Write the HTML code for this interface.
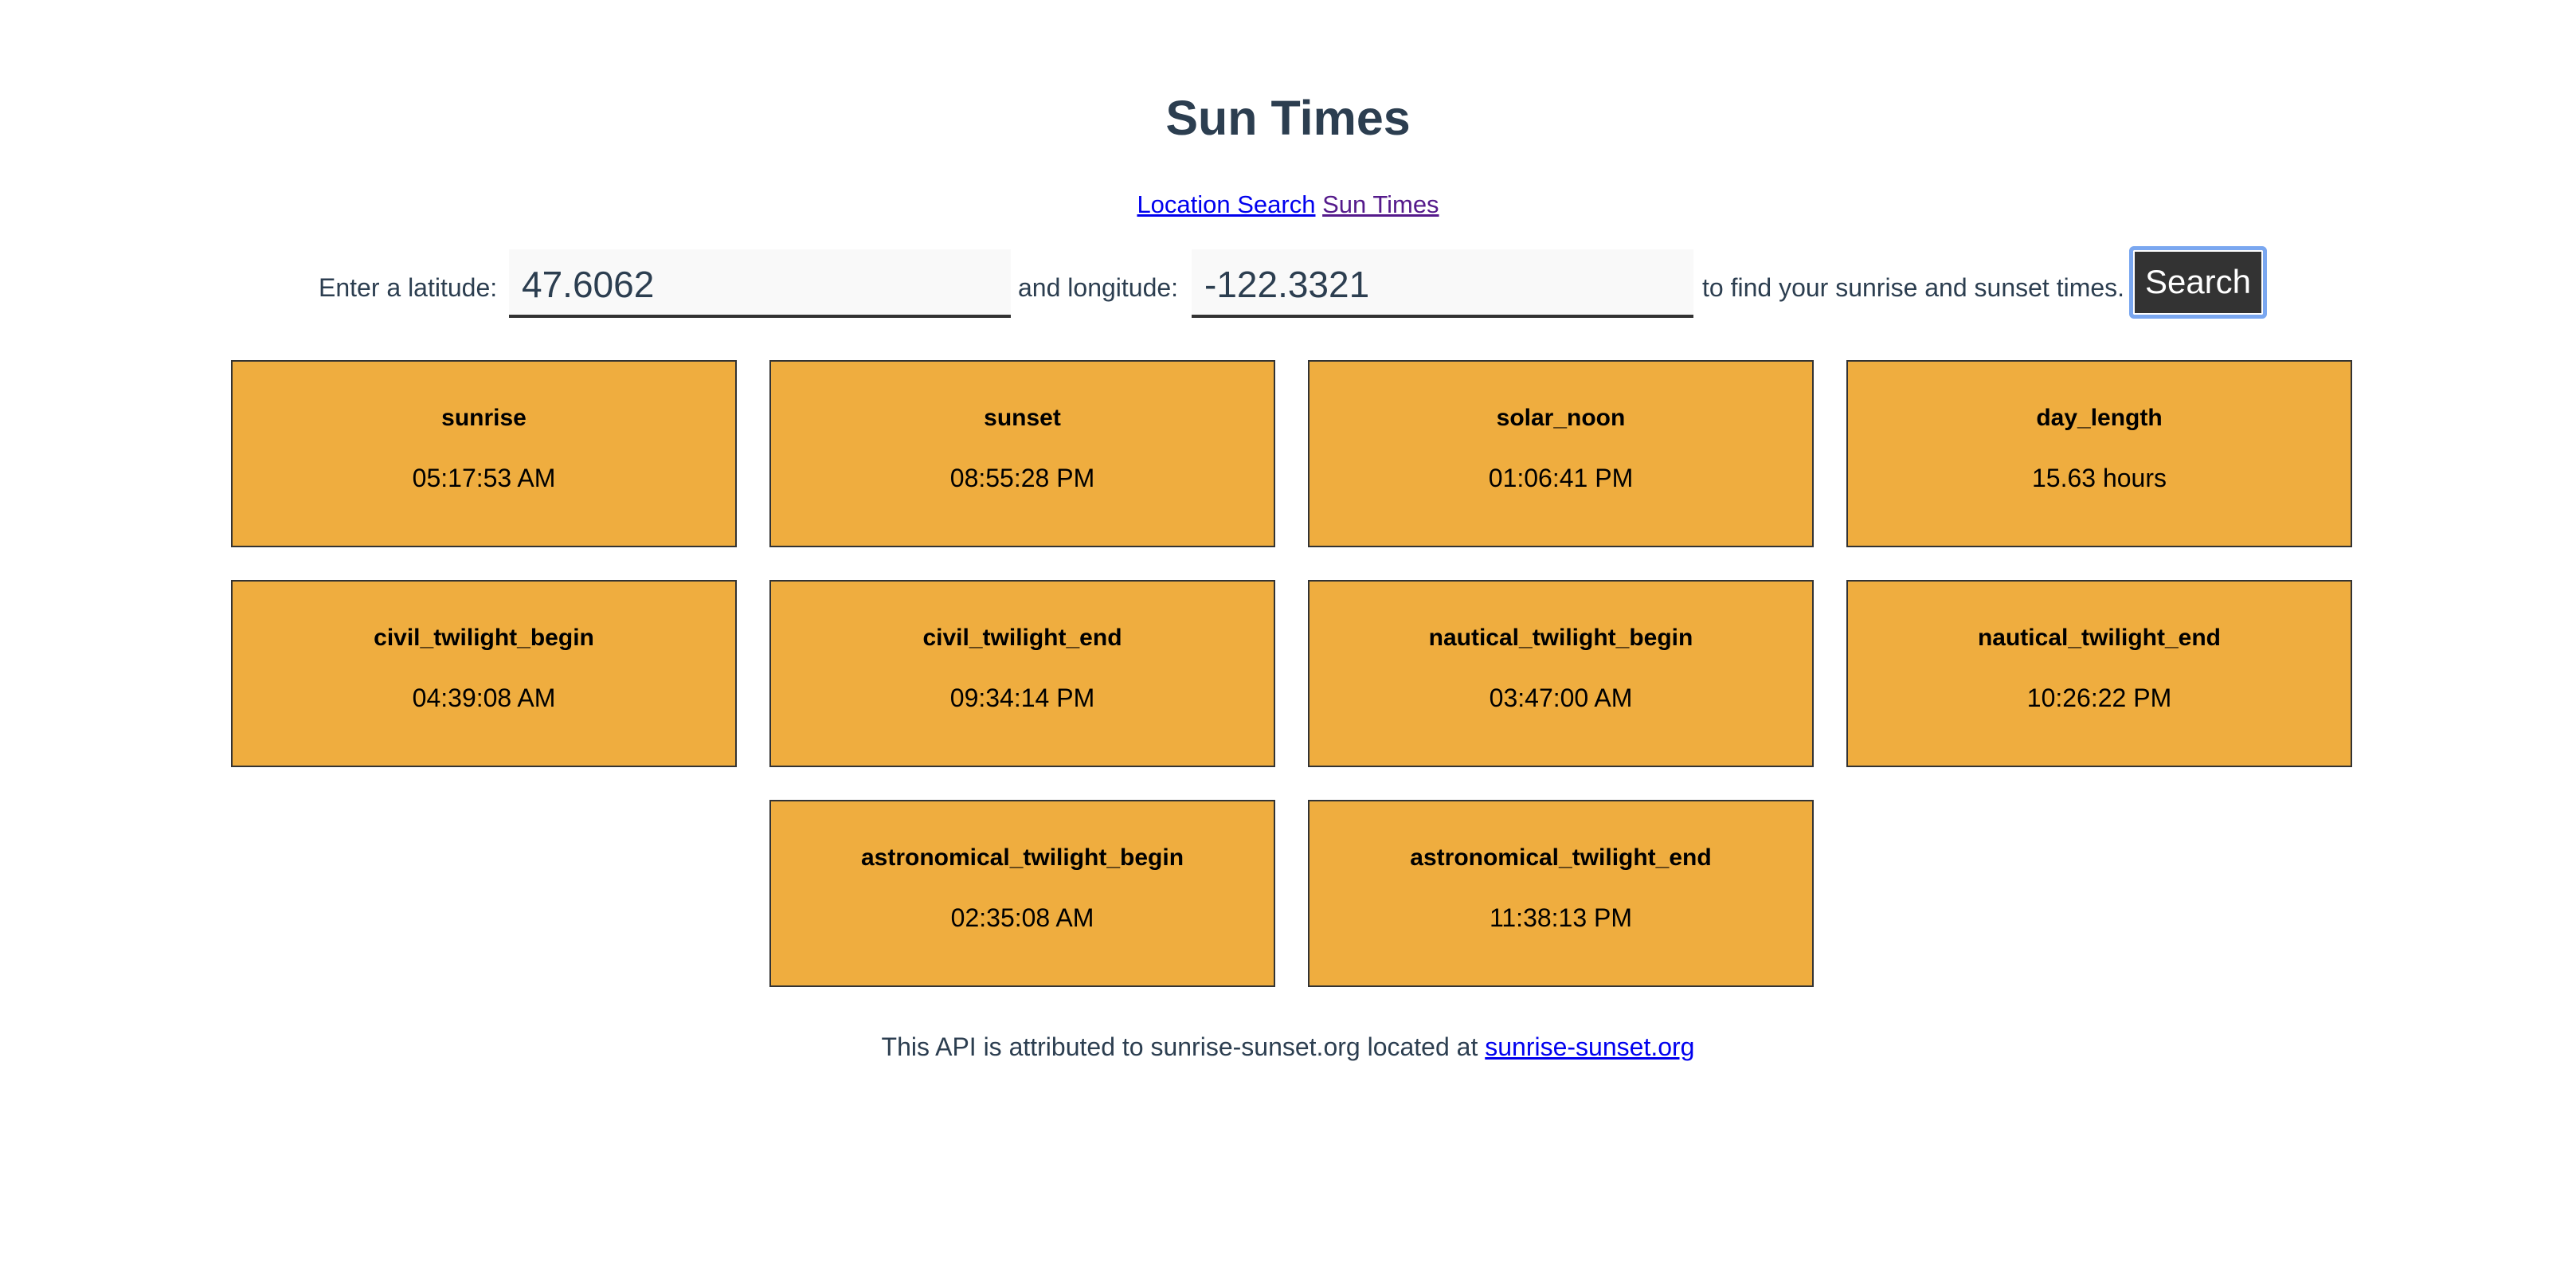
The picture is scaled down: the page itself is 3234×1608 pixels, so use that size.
<!DOCTYPE html>
<html><head><meta charset="utf-8"><style>
html,body{margin:0;padding:0;background:#fff;width:3234px;height:1608px;overflow:hidden;font-family:"Liberation Sans",sans-serif;}
.abs{position:absolute;}
h1{position:absolute;left:0;width:3234px;top:108px;margin:0;text-align:center;font-size:61px;color:#2c3e50;font-weight:bold;line-height:80px;}
.links{left:0;width:3234px;top:237px;text-align:center;font-size:31px;line-height:40px;}
.links a{color:#0000ee}
.links a.v{color:#551a8b}
.lbl{font-size:32px;color:#2c3e50;line-height:40px;top:341px;white-space:nowrap}
.inp{background:#f9f9f9;border-bottom:4px solid #333;height:82px;top:313px;width:630px;box-sizing:content-box}
.inp span{position:absolute;left:16px;top:19px;font-size:46px;line-height:50px;color:#2c3e50}
.btn{left:2673px;top:309px;width:173px;height:91px;box-sizing:border-box;border:5px solid #7aa7f0;border-radius:6px;background:#333;color:#fff;font-size:42px;text-align:center;line-height:80px;box-shadow:inset 0 0 0 2px #fff}
.card{position:absolute;width:635px;height:235px;box-sizing:border-box;border:2px solid #333;background:#efad3f;text-align:center;color:#000}
.card b{position:absolute;left:0;right:0;top:51px;font-size:30px;line-height:40px}
.card i{position:absolute;left:0;right:0;top:126px;font-size:32px;font-style:normal;line-height:40px}
.foot{left:0;width:3234px;top:1294px;text-align:center;font-size:32px;color:#2c3e50;line-height:40px}
.foot a{color:#0000ee}
</style></head><body>
<h1>Sun Times</h1>
<div class="abs links"><a href="#">Location Search</a> <a class="v" href="#">Sun Times</a></div>
<div class="abs lbl" style="left:400px">Enter a latitude:</div>
<div class="abs inp" style="left:639px"><span>47.6062</span></div>
<div class="abs lbl" style="left:1278px">and longitude:</div>
<div class="abs inp" style="left:1496px"><span>-122.3321</span></div>
<div class="abs lbl" style="left:2137px">to find your sunrise and sunset times.</div>
<div class="abs btn">Search</div>

<div class="card" style="left:290px;top:452px"><b>sunrise</b><i>05:17:53 AM</i></div>
<div class="card" style="left:966px;top:452px"><b>sunset</b><i>08:55:28 PM</i></div>
<div class="card" style="left:1642px;top:452px"><b>solar_noon</b><i>01:06:41 PM</i></div>
<div class="card" style="left:2318px;top:452px"><b>day_length</b><i>15.63 hours</i></div>

<div class="card" style="left:290px;top:728px"><b>civil_twilight_begin</b><i>04:39:08 AM</i></div>
<div class="card" style="left:966px;top:728px"><b>civil_twilight_end</b><i>09:34:14 PM</i></div>
<div class="card" style="left:1642px;top:728px"><b>nautical_twilight_begin</b><i>03:47:00 AM</i></div>
<div class="card" style="left:2318px;top:728px"><b>nautical_twilight_end</b><i>10:26:22 PM</i></div>

<div class="card" style="left:966px;top:1004px"><b>astronomical_twilight_begin</b><i>02:35:08 AM</i></div>
<div class="card" style="left:1642px;top:1004px"><b>astronomical_twilight_end</b><i>11:38:13 PM</i></div>

<div class="abs foot">This API is attributed to sunrise-sunset.org located at <a href="#">sunrise-sunset.org</a></div>
</body></html>
